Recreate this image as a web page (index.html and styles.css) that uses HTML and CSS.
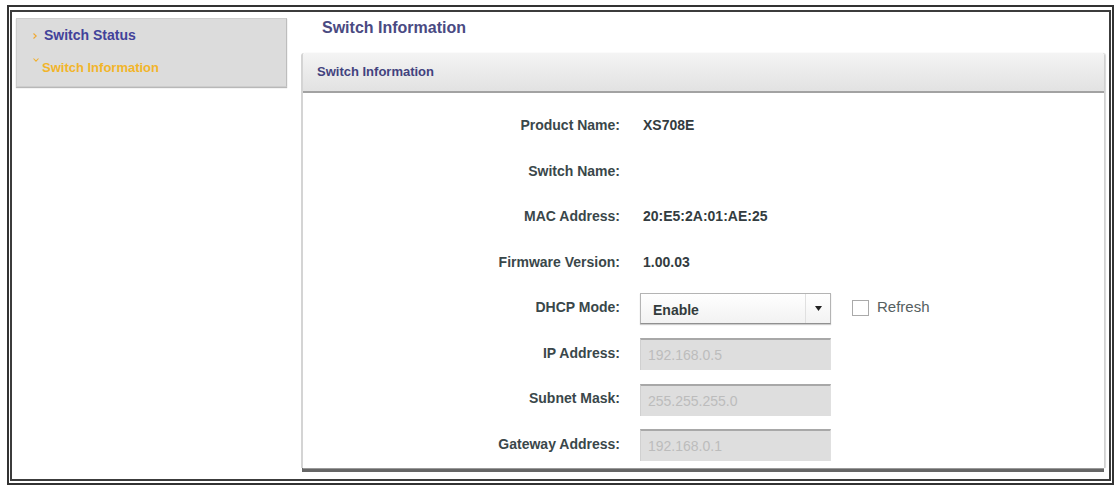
FILE: index.html
```html
<!DOCTYPE html>
<html>
<head>
<meta charset="utf-8">
<link rel="stylesheet" href="styles.css">
</head>
<body>
<div class="frame">
  <div class="frame-inner">
    <nav class="sidebar">
      <div class="nav-item nav-status">
        <svg class="chev-right" width="4" height="6" viewBox="0 0 4 6"><path d="M0.5 0.5 L3.2 3 L0.5 5.5" fill="none" stroke="#f0a830" stroke-width="1.1"/></svg>
        <span>Switch Status</span>
      </div>
      <div class="nav-item nav-info">
        <svg class="chev-down" width="6" height="4" viewBox="0 0 6 4"><path d="M0.5 0.5 L3 3.2 L5.5 0.5" fill="none" stroke="#f0b030" stroke-width="1.1"/></svg>
        <span>Switch Information</span>
      </div>
    </nav>
    <main class="main">
      <h1 class="page-title">Switch Information</h1>
      <section class="panel">
        <div class="panel-head">Switch Information</div>
        <div class="panel-body">
          <div class="lbl">Product Name:</div><div class="val">XS708E</div>
          <div class="lbl">Switch Name:</div><div class="val"></div>
          <div class="lbl">MAC Address:</div><div class="val">20:E5:2A:01:AE:25</div>
          <div class="lbl">Firmware Version:</div><div class="val">1.00.03</div>
          <div class="lbl">DHCP Mode:</div>
          <div class="ctrl">
            <div class="select"><span class="select-text">Enable</span><span class="select-btn"><svg width="7" height="5" viewBox="0 0 7 5"><path d="M0 0 H7 L3.5 5 Z" fill="#222"/></svg></span></div>
            <span class="check"></span><span class="check-label">Refresh</span>
          </div>
          <div class="lbl">IP Address:</div><div class="ctrl"><div class="input">192.168.0.5</div></div>
          <div class="lbl">Subnet Mask:</div><div class="ctrl"><div class="input">255.255.255.0</div></div>
          <div class="lbl">Gateway Address:</div><div class="ctrl"><div class="input">192.168.0.1</div></div>
        </div>
      </section>
    </main>
  </div>
</div>
</body>
</html>
```

FILE: styles.css
```css
html, body {
  margin: 0;
  padding: 0;
  background: #fff;
  font-family: "Liberation Sans", Arial, sans-serif;
}
.frame {
  margin: 5px 3px 0 7px;
  height: 471px;
  border: 2px solid #333;
  padding: 3px 1px 2px 1px;
}
.frame-inner {
  box-sizing: border-box;
  height: 100%;
  border: 2px solid #3c3c3c;
  display: flex;
  align-items: flex-start;
  padding: 6px 4px 0 4px;
}
.sidebar {
  box-sizing: border-box;
  width: 271px;
  height: 69px;
  background: #dcdcdc;
  border: 1px solid #cdcdcd;
  border-right-color: #bdbdbd;
  box-shadow: 0 1px 1px #b8b8b8;
  padding: 0 0 4px 0;
  flex: none;
}
.nav-item {
  height: 32px;
  display: flex;
  align-items: center;
  padding-left: 16px;
  font-weight: bold;
  font-size: 14px;
}
.nav-status { color: #42429a; }
.nav-info { color: #f2b52a; font-size: 13px; }
.chev-right { margin-right: 7px; margin-top: 1px; }
.chev-down { margin-right: 3px; align-self: flex-start; margin-top: 7px; }
.main {
  margin-left: 14px;
  flex: 1;
}
.page-title {
  margin: 0;
  padding: 0 0 0 21px;
  height: 35px;
  line-height: 20px;
  font-size: 16px;
  font-weight: bold;
  color: #4a4a82;
}
.panel {
  box-sizing: border-box;
  height: 415px;
  display: flex;
  flex-direction: column;
  border-radius: 3px 3px 0 0;
  box-shadow: 0 5px 0 -1px #666, 1px 0 1px #d8d8d8;
  border-left: 2px solid #d4d4d4;
  border-right: 1px solid #d0d0d0;
}
.panel-head {
  height: 38px;
  line-height: 38px;
  background: linear-gradient(#f4f4f4, #e2e2e2);
  border-bottom: 2px solid #a2a2a2;
  border-radius: 3px 3px 0 0;
  padding-left: 14px;
  font-size: 13px;
  font-weight: bold;
  color: #42427e;
}
.panel-body {
  flex: 1;
  display: grid;
  grid-template-columns: 317px 1fr;
  grid-auto-rows: 45.5px;
  column-gap: 20px;
  padding-top: 11px;
  background: #fff;
  border-bottom: 1px solid #999;
}
.lbl {
  display: flex;
  align-items: center;
  justify-content: flex-end;
  font-size: 14px;
  font-weight: bold;
  color: #3a474a;
  margin-top: -3px;
}
.val {
  display: flex;
  align-items: center;
  padding-left: 3px;
  font-size: 14px;
  font-weight: bold;
  color: #333c40;
  margin-top: -3px;
}
.ctrl {
  display: flex;
  align-items: center;
}
.select {
  box-sizing: border-box;
  width: 191px;
  height: 31px;
  border: 1px solid #b4b4b4;
  border-bottom-color: #909090;
  background: linear-gradient(#ffffff, #f2f2f2);
  box-shadow: 0 1px 1px #ccc;
  display: flex;
  align-items: center;
}
.select-text {
  flex: 1;
  padding-left: 12px;
  font-size: 14px;
  font-weight: bold;
  color: #333c3c;
  padding-top: 2px;
}
.select-btn {
  width: 24px;
  height: 100%;
  border-left: 1px solid #e0e0e0;
  display: flex;
  align-items: center;
  justify-content: center;
}
.check {
  box-sizing: border-box;
  width: 17px;
  height: 16px;
  border: 1px solid #aaa;
  background: #fff;
  margin-left: 21px;
  align-self: flex-start;
  margin-top: 14px;
}
.check-label {
  margin-left: 8px;
  font-size: 15px;
  color: #556060;
  align-self: flex-start;
  margin-top: 12px;
}
.input {
  box-sizing: border-box;
  width: 191px;
  height: 32px;
  background: #dedede;
  border-top: 2px solid #a8a8a8;
  border-left: 1px solid #d0d0d0;
  border-right: 1px solid #e0e0e0;
  padding-left: 7px;
  display: flex;
  align-items: center;
  font-size: 14px;
  color: #bcbcbc;
}
```
